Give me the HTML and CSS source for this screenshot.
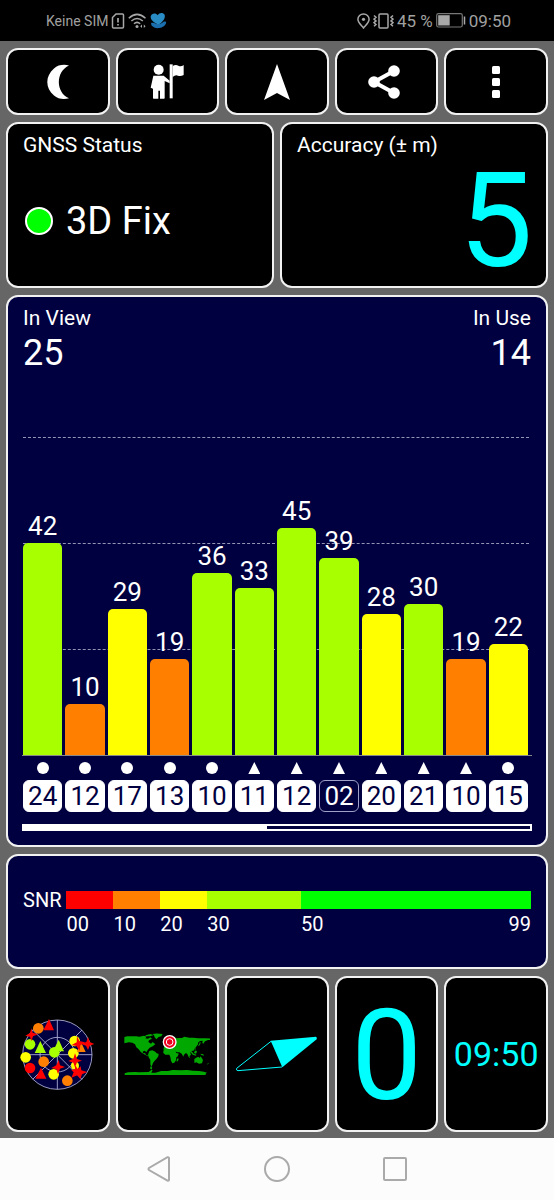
FILE: index.html
```html
<!DOCTYPE html>
<html lang="de">
<head>
<meta charset="utf-8">
<meta name="viewport" content="width=device-width, initial-scale=1">
<title>GNSS Status</title>
<link rel="stylesheet" href="styles.css">
</head>
<body>
<header class="statusbar">
  <div class="status-group">
    <span class="carrier">Keine SIM</span>
    <svg width="14" height="16" viewBox="0 0 14 16" fill="none" stroke="#a8a8a8" stroke-width="1.5" aria-hidden="true"><path d="M5 1h6.500q1 0 1 1v12q0 1-1 1h-9q-1 0-1-1V4.500z"/><path d="M7 5v4.500M7 11v1.600" stroke-width="1.700"/></svg>
    <svg width="19" height="16" viewBox="0 0 19 16" fill="none" stroke="#a8a8a8" stroke-width="1.500" aria-hidden="true"><path d="M.8 5.200Q9 -2.500 17.500 5.200M3.400 8Q9 3 14.800 8M6 10.700Q9 8 12.200 10.700"/><circle cx="9" cy="13.500" r="1.500" fill="#a8a8a8" stroke="none"/><path d="M14 11.500l-1.800 1.800 1.800 1.800zM15.800 11.500l1.800 1.800-1.800 1.800z" fill="#a8a8a8" stroke="none"/></svg>
    <svg width="17" height="16" viewBox="0 0 17 16" aria-hidden="true"><path d="M7 11C3 9 0 6 .8 3 1.800-.3 6-.3 7.800 2.300 9-.6 13.300-.7 14.600 1.800 15.800 5.500 12 9.500 9.500 11z" fill="#2a8cc4"/><path d="M1 10c2-.6 4 .4 6 1 2.500.5 4.500-.7 6.500-2.200 1.500-.8 2.800-.3 2.600.9-.3 2.600-3.600 4.800-6.800 5.300C6 15.500 3.500 14.500 1.500 12.500z" fill="#1b6fae"/></svg>
  </div>
  <div class="status-group">
    <svg width="13" height="16" viewBox="0 0 13 16" fill="none" stroke="#a8a8a8" stroke-width="1.500" aria-hidden="true"><path d="M6.500 15C4 12 .9 9.500 .9 6.300a5.600 5.400 0 0 1 11.200 0C12.100 9.500 9 12 6.500 15z"/><circle cx="6.500" cy="6.300" r="1.600" fill="#a8a8a8" stroke="none"/></svg>
    <svg width="21" height="16" viewBox="0 0 21 16" fill="none" stroke="#a8a8a8" stroke-width="1.500" aria-hidden="true"><rect x="6" y="1" width="9" height="14" rx="1"/><path d="M1 2.500l2 1.800-2 1.800 2 1.800-2 1.800 2 1.800-2 1.800M20 2.500l-2 1.800 2 1.800-2 1.800 2 1.800-2 1.800 2 1.800"/></svg>
    <span class="battery">45 %</span>
    <svg width="30" height="15" viewBox="0 0 30 15" aria-hidden="true"><rect x=".7" y=".7" width="25.600" height="13.300" rx="1.800" fill="none" stroke="#777" stroke-width="1.200"/><rect x="2.200" y="2.200" width="11.500" height="10.300" fill="#a8a8a8"/><path d="M28.500 3.500v8" stroke="#a8a8a8" stroke-width="1.500"/></svg>
    <time class="clock">09:50</time>
  </div>
</header>

<main class="app">
  <div class="row five toolbar">
    <button class="card tool" aria-label="Night mode"><svg width="22" height="36" viewBox="0 0 22 36" fill="#fff"><path d="M22 1.500C17 .2 11 .8 7 4.500 2.500 8.500 .3 13 .3 18S2.500 27.500 7 31.500C11 35.200 17 35.500 22 34.300 8.500 28.500 8.500 7.500 22 1.500z"/></svg></button>
    <button class="card tool" aria-label="Guide"><svg width="34" height="35" viewBox="0 0 102 105" fill="#fff"><circle cx="26" cy="17" r="15"/><path d="M10 35h31l18 15v8L44 51v51q0 2-2 2H30V80h-5v24H11q-2 0-2-2V74L2 71z"/><path d="M59 1h9v102h-9z"/><path d="M68 6q9-6 17-1t16-2v30q-9 5-17 2t-16 4z"/></svg></button>
    <button class="card tool" aria-label="Navigate"><svg width="28" height="36" viewBox="0 0 28 36" fill="#fff"><path d="M14 0l13 36-13-7-13 7z"/></svg></button>
    <button class="card tool share" aria-label="Share"><svg width="32" height="34" viewBox="0 0 32 34" fill="#fff"><path d="M26 6L6 17l20 11" fill="none" stroke="#fff" stroke-width="4"/><circle cx="26" cy="6" r="5.800"/><circle cx="6" cy="17" r="5.800"/><circle cx="26" cy="28" r="5.800"/></svg></button>
    <button class="card tool" aria-label="More"><svg width="8" height="32" viewBox="0 0 8 32" fill="#fff"><rect width="8" height="8" rx="1.500"/><rect y="12" width="8" height="8" rx="1.500"/><rect y="24" width="8" height="8" rx="1.500"/></svg></button>
  </div>

  <div class="row two">
    <section class="card info">
      <h2 class="label">GNSS Status</h2>
      <p class="fix"><span class="led"></span>3D Fix</p>
    </section>
    <section class="card info">
      <h2 class="label">Accuracy (± m)</h2>
      <p class="accuracy">5</p>
    </section>
  </div>

  <section class="card navy satellites">
    <div class="counts">
      <div><h2 class="label">In View</h2><p class="count">25</p></div>
      <div class="right"><h2 class="label">In Use</h2><p class="count">14</p></div>
    </div>
    <div class="plot">
      <div class="grid-lines"><i></i><i></i><i></i></div>
      <div class="col"><span>42</span><div class="bar lime" style="height:66.7%"></div></div>
      <div class="col"><span>10</span><div class="bar orange" style="height:15.9%"></div></div>
      <div class="col"><span>29</span><div class="bar yellow" style="height:46%"></div></div>
      <div class="col"><span>19</span><div class="bar orange" style="height:30.2%"></div></div>
      <div class="col"><span>36</span><div class="bar lime" style="height:57.1%"></div></div>
      <div class="col"><span>33</span><div class="bar lime" style="height:52.4%"></div></div>
      <div class="col"><span>45</span><div class="bar lime" style="height:71.4%"></div></div>
      <div class="col"><span>39</span><div class="bar lime" style="height:61.9%"></div></div>
      <div class="col"><span>28</span><div class="bar yellow" style="height:44.4%"></div></div>
      <div class="col"><span>30</span><div class="bar lime" style="height:47.6%"></div></div>
      <div class="col"><span>19</span><div class="bar orange" style="height:30.2%"></div></div>
      <div class="col"><span>22</span><div class="bar yellow" style="height:34.9%"></div></div>
    </div>
    <div class="ids">
      <div class="sat"><i class="dot"></i><b>24</b></div>
      <div class="sat"><i class="dot"></i><b>12</b></div>
      <div class="sat"><i class="dot"></i><b>17</b></div>
      <div class="sat"><i class="dot"></i><b>13</b></div>
      <div class="sat"><i class="dot"></i><b>10</b></div>
      <div class="sat"><i class="tri"></i><b>11</b></div>
      <div class="sat"><i class="tri"></i><b>12</b></div>
      <div class="sat"><i class="tri"></i><b class="unused">02</b></div>
      <div class="sat"><i class="tri"></i><b>20</b></div>
      <div class="sat"><i class="tri"></i><b>21</b></div>
      <div class="sat"><i class="tri"></i><b>10</b></div>
      <div class="sat"><i class="dot"></i><b>15</b></div>
    </div>
    <div class="scroll"><div class="thumb"></div></div>
  </section>

  <section class="card navy snr">
    <span class="snr-label">SNR</span>
    <div class="scale">
      <div class="red"></div><div class="orange"></div><div class="yellow"></div><div class="lime"></div><div class="green"></div>
    </div>
    <div class="scale ticks">
      <span>00</span><span>10</span><span>20</span><span>30</span><span class="ends"><span>50</span><span>99</span></span>
    </div>
  </section>

  <div class="row five tiles">
    <button class="card tile" aria-label="Sky view">
      <svg width="75" height="75" viewBox="16 34 225 225">
        <g fill="#000040" stroke="#b8b8e0" stroke-width="2.500"><circle cx="128" cy="147" r="104"/><circle cx="128" cy="147" r="52"/><path d="M128 43v208M24 147h208M54 73l74 74 74-74M54 221l74-74 74 74" fill="none"/></g>
        <g fill="#ff0"><circle cx="33" cy="155" r="16"/><circle cx="180" cy="106" r="16"/><circle cx="176" cy="143" r="16"/><circle cx="117" cy="206" r="16"/><circle cx="181" cy="180" r="12"/></g>
        <g fill="#a8ff00"><circle cx="46" cy="116" r="16"/><path d="M60 142l17-36 17 36zM115 137l17-35 16 35z"/><circle cx="119" cy="140" r="16"/></g>
        <g fill="#ff8000"><circle cx="87" cy="168" r="16"/><circle cx="158" cy="225" r="16"/><path d="M186 139l14-28 13 28z"/></g>
        <path fill="red" d="M50 68l4 13 16 5-15 6-5 15-4-14-14-3 14-8z"/>
        <circle cx="71" cy="68" r="16" fill="#ff8000"/>
        <g fill="red"><circle cx="46" cy="187" r="16"/><path d="M86 74l17-34 15 34zM62 219l17-33 16 33z"/><path d="M132 163l4 16 15 5-15 5-6 16-5-14-15-4 15-8zM181 143l6 17 15 5-15 5-6 15-5-14-15-5 15-7zM187 92l7 14 17 4-14 9-2 16-10-14-14-3 15-8zM220 94l5 15 14 6-14 5-5 13-6-13-14-5 15-6zM181 177l8 13 9-8 2 12 18 5-16 7-5 14-9-11-18 7 7-16-7-7 11-3z"/></g>
      </svg>
    </button>
    <button class="card tile" aria-label="World map">
      <svg width="86" height="42" viewBox="28 86 258 126" fill="#00a800">
        <path d="M29 98l9-2 26 0 10 1 14-3 8 3-4 5 8 1 7-4 5 4-9 5-2 5 8 5 5-5 8 7-8 6-9 4-6 7-3 6-7-4-5 3 1 5 6-1 3 6 7 2-2 2-12-7-8-5-7-9-7-6-4-9-8-5-10-1-14 3z"/>
        <path d="M92 93l16-4 8 4-10 3-12 0zM113 89q12-3 31 0l-4 7-8 2-7 7-5-6-2-6z"/>
        <path d="M104 140l9-2 9 4 3 4 7 3-1 7-5 7-6 6-5 7-3 8-2 4-3-8 0-13-5-8-2-8z"/>
        <path d="M148 128l3-6 7-2-1-6 7-4 6-8 9-5 6 5 9-1 8 0 7-4 15 3 12 0 14 2 22 0 21 1-3 4-10 0-9 4-5 7-3-2 1-7-8 1-6 5 0 5-6 8-5 5 0 5-4 1-6 1-2 6 2 6-5 3 3 7-5-4-4-9-4-3-6 5-2 6-5-9-7-4-7 0-5-3 2 6 7 4-3 6-7 2-4-6-6-12-3-2-7 1-7-4-8 0z"/>
        <path d="M146 139l6-6 12-2 6 3 9 0 6 12 8 2-8 11-1 9-5 7-6 2-4-8-2-11-3-7-12 0-6-5z"/>
        <path d="M228 138l9 10 8 3-1 3-10-3-7-9zM238 143l6-5 3 4-3 6-5-1zM239 164l8-5 5-1 3 3 3-5 7 11-3 10-9 1-8-4-6 2zM189 162l3 1-2 7-4 2 0-6zM278 178l5-3-4 6zM257 148l9 2 2 4-8-2zM240 130l2-1 1 8-3-3zM253 120l3-8 2 3-3 8-6 3z"/>
        <path d="M108 186l5 4-3 6-4-4zM30 212v-5l10-3 22-1 10 1 30-1 8-6 4 0-4 8 12 0 18-5 20 0 14-3 25 1 18-1 18 2 18 1 15 2 9 3-4 3 0 4z"/>
        <circle cx="165" cy="113" r="21" fill="#fff"/><circle cx="165" cy="113" r="17" fill="#f00020"/><circle cx="165" cy="113" r="10" fill="none" stroke="#fff" stroke-width="3"/>
      </svg>
    </button>
    <button class="card tile" aria-label="Compass">
      <svg width="82" height="36" viewBox="34 198 246 108"><path d="M172 291l-132 11q-7-1-4-7L139 214" fill="none" stroke="#0ff" stroke-width="3"/><path d="M138 212l136-12q4 2 2 8L173 292z" fill="#0ff"/></svg>
    </button>
    <button class="card tile speed">0</button>
    <button class="card tile time">09:50</button>
  </div>
</main>

<nav class="navbar">
  <button aria-label="Back"><svg width="26" height="28" viewBox="0 0 26 28"><path d="M23 3v22q-.5 1-1.500.500L3 15q-1-1 0-2L21.500 2.200q1-.2 1.500.8z"/></svg></button>
  <button aria-label="Home"><svg width="26" height="28" viewBox="0 0 26 28"><circle cx="13" cy="14" r="12"/></svg></button>
  <button aria-label="Recent"><svg width="26" height="28" viewBox="0 0 26 28"><rect x="2" y="3" width="22" height="22" rx="1"/></svg></button>
</nav>
</body>
</html>
```
FILE: styles.css
```css
* {
  box-sizing: border-box;
}

body {
  margin: 0;
  min-height: 100vh;
  display: flex;
  flex-direction: column;
  background: #666;
  color: #fff;
  font-family: Roboto, "Liberation Sans", sans-serif;
}

h2,
p {
  margin: 0;
  font-weight: 400;
}

svg {
  display: block;
  flex: none;
}

button {
  padding: 0;
  border: 0;
  background: none;
  color: inherit;
  font: inherit;
}

.statusbar {
  display: flex;
  justify-content: space-between;
  align-items: center;
  height: 41px;
  padding: 0 43px 0 46px;
  background: #000;
  color: #a0a0a0;
}

.status-group {
  display: flex;
  align-items: center;
  gap: 3px;
}

.carrier {
  font-size: 14px;
}

.battery,
.clock {
  font-size: 17px;
}

.app {
  flex: 1;
  display: flex;
  flex-direction: column;
  gap: 7px;
  padding: 7px 6px 6px;
}

.row {
  display: grid;
  gap: 6px;
}

.five {
  grid-template-columns: repeat(5, 1fr);
}

.two {
  grid-template-columns: repeat(2, 1fr);
}

.card {
  border: 2px solid #f2f2f2;
  border-radius: 12px;
  background: #000;
}

.navy {
  background: #000040;
}

.tool {
  display: flex;
  justify-content: center;
  align-items: center;
  height: 67px;
}

.share {
  padding-right: 6px;
}

.info {
  height: 166px;
  padding: 8px 15px;
}

.label {
  font-size: 21px;
  line-height: 26px;
}

.fix {
  display: flex;
  align-items: center;
  gap: 13px;
  margin-top: 40px;
  padding-left: 2px;
  font-size: 38px;
  line-height: 46px;
}

.led {
  width: 28px;
  height: 28px;
  border: 2px solid #fff;
  border-radius: 50%;
  background: #0f0;
}

.accuracy {
  margin-right: -2px;
  font-size: 132px;
  line-height: 126px;
  text-align: right;
}

.accuracy,
.speed,
.time {
  color: #0ff;
}

.satellites {
  padding: 8px 14px 14px;
}

.counts {
  display: flex;
  justify-content: space-between;
  padding: 0 1px;
}

.right {
  text-align: right;
}

.count {
  font-size: 36px;
  line-height: 44px;
}

.plot {
  position: relative;
  display: grid;
  grid-template-columns: repeat(12, 1fr);
  gap: 3px;
  height: 319px;
  margin-top: 62px;
  padding: 0 4px 0 1px;
  border-bottom: 1px solid #888;
}

.grid-lines {
  position: absolute;
  inset: 0 3px 0 1px;
  display: grid;
  grid-template-rows: repeat(3, 1fr);
}

.grid-lines i {
  border-top: 1px dashed #9494b4;
}

.col {
  position: relative;
  display: flex;
  flex-direction: column;
  justify-content: flex-end;
  text-align: center;
}

.col span {
  font-size: 26px;
  line-height: 34px;
}

.bar {
  border-radius: 5px 5px 0 0;
}

.red {
  background: #f00;
}

.orange {
  background: #ff8000;
}

.yellow {
  background: #ff0;
}

.lime {
  background: #a8ff00;
}

.green {
  background: #0f0;
}

.ids {
  display: grid;
  grid-template-columns: repeat(12, 1fr);
  gap: 3px;
  padding: 6px 4px 0 1px;
}

.sat {
  display: flex;
  flex-direction: column;
  align-items: stretch;
  gap: 6px;
}

.dot,
.tri {
  align-self: center;
  width: 12px;
  height: 12px;
  background: #fff;
}

.dot {
  border-radius: 50%;
}

.tri {
  clip-path: polygon(50% 0, 100% 100%, 0 100%);
}

.sat b {
  height: 32px;
  border: 1px solid #fff;
  border-radius: 6px;
  background: #fff;
  color: #000040;
  font-size: 26px;
  font-weight: 400;
  line-height: 30px;
  text-align: center;
}

.sat .unused {
  border-color: #a0a0c8;
  background: none;
  color: #fff;
}

.scroll {
  height: 7px;
  margin-top: 12px;
  border: 2px solid #fff;
}

.thumb {
  width: 48%;
  height: 100%;
  background: #fff;
}

.snr {
  display: grid;
  grid-template-columns: auto 1fr;
  align-content: center;
  align-items: center;
  column-gap: 5px;
  height: 115px;
  padding: 0 15px;
  font-size: 20px;
  line-height: 24px;
}

.scale {
  display: grid;
  grid-template-columns: 10fr 10fr 10fr 20fr 49fr;
}

.scale div {
  height: 18px;
}

.ticks {
  grid-column: 2;
}

.ends {
  display: flex;
  justify-content: space-between;
}

.tile {
  display: flex;
  justify-content: center;
  align-items: center;
  height: 156px;
}

.speed {
  padding-top: 3px;
  font-size: 126px;
  line-height: 126px;
}

.time {
  font-size: 34px;
}

.navbar {
  display: grid;
  grid-template-columns: repeat(3, 1fr);
  height: 62px;
  padding: 0 18%;
  background: #fcfcfc;
}

.navbar button {
  display: flex;
  justify-content: center;
  align-items: center;
}

.navbar svg {
  fill: none;
  stroke: #aaa;
  stroke-width: 2;
}
```
